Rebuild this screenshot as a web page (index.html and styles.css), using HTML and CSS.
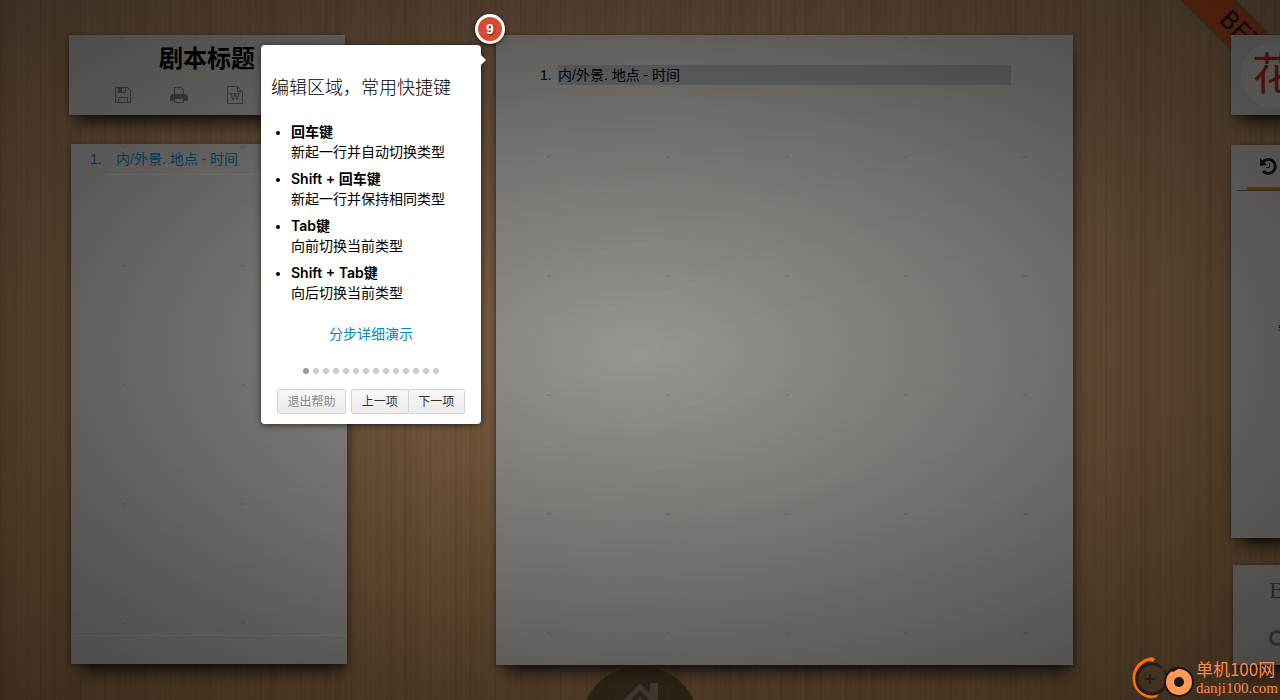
FILE: index.html
```
<!DOCTYPE html>
<html lang="zh-CN">
<head>
<meta charset="utf-8">
<title>剧本标题</title>
<link rel="stylesheet" href="styles.css">
</head>
<body>
<a class="ribbon" href="#">BETA</a>
<div class="workspace">
  <aside class="column">
    <header class="paper toolbar">
      <h1 class="title">剧本标题</h1>
      <div class="tools">
        <button class="tool" aria-label="保存"><svg viewBox="0 0 18 18"><path d="M1.500 1.500h12l3 3v12h-15z"/><path d="M4.500 16.500v-5h9v5M4.500 1.500v5h7v-5"/><path class="solid" d="M4 1h4v5.500H4z"/></svg></button>
        <button class="tool" aria-label="打印"><svg viewBox="0 0 18 18"><path d="M4.500 8V1.500h7l2 2V8M4.500 12.500v4h9v-4"/><path class="solid" d="M2 8h14l2 2v5h-4v-2H4v2H0v-5z"/></svg></button>
        <button class="tool" aria-label="导出 Word"><svg class="tall" viewBox="0 0 18 20"><path d="M1.500 1.500h10l5 5v12h-15zM11.500 1.500v5h5"/><path d="M3.500 8.500H7M11 8.500h3.500M5 8.500L7 15l2-6 2 6 2-6.500M8 8.500h2"/></svg></button>
      </div>
    </header>
    <nav class="paper outline">
      <ol class="scenes">
        <li class="scene"><span class="scene-no">1.</span><a class="scene-link" href="#">内/外景. 地点 - 时间</a></li>
      </ol>
      <div class="outline-foot"></div>
    </nav>
  </aside>
  <main class="paper editor">
    <ol class="script">
      <li class="row"><span class="row-no">1.</span><span class="line">内/外景. 地点 - 时间</span></li>
    </ol>
  </main>
  <aside class="column side">
    <section class="paper brand"><span class="logo">花</span></section>
    <section class="paper history">
      <div class="tabs">
        <button class="tab" aria-label="历史"><svg viewBox="0 0 18 18"><path d="M3.500 5.500A7 7 0 1 1 4 14"/><path class="solid" d="M1 1l0 8 7-1z"/><path class="thin" d="M10.500 6v4.500H7"/></svg></button>
      </div>
      <p class="empty">暂无</p>
    </section>
    <section class="paper format">
      <button class="style-btn">B</button>
      <span class="ring"></span>
    </section>
  </aside>
</div>
<button class="home" aria-label="首页"><svg viewBox="0 0 60 50"><path d="M3 36L30 9l27 27" stroke-width="5"/><path class="solid" d="M40 5h8v20l-8-8zM9 39l21-20 21 20v11H9z"/></svg></button>
<div class="shade"></div>
<section class="guide" role="dialog" aria-labelledby="guide-title">
  <span class="step">9</span>
  <h2 class="guide-title" id="guide-title">编辑区域，常用快捷键</h2>
  <ul class="keys">
    <li><b>回车键</b><br>新起一行并自动切换类型</li>
    <li><b>Shift + 回车键</b><br>新起一行并保持相同类型</li>
    <li><b>Tab键</b><br>向前切换当前类型</li>
    <li><b>Shift + Tab键</b><br>向后切换当前类型</li>
  </ul>
  <a class="demo" href="#">分步详细演示</a>
  <div class="dots"><i class="on"></i><i></i><i></i><i></i><i></i><i></i><i></i><i></i><i></i><i></i><i></i><i></i><i></i><i></i></div>
  <div class="actions">
    <button class="btn quit">退出帮助</button>
    <div class="pair"><button class="btn">上一项</button><button class="btn">下一项</button></div>
  </div>
</section>
<div class="site-mark">
  <svg class="site-logo" viewBox="0 0 64 44"><path d="M22 3A19 19 0 0 0 22 41" fill="none" stroke="#ff6e0a" stroke-width="3"/><path d="M12 6q6-7 12-3l-2 3q-5-2-10 0zM13 38q7 6 13 3l2-5q-8 4-15 2z" fill="#ff6e0a"/><path d="M31 12a15 15 0 1 0 3 18" fill="none" stroke="#261c18" stroke-width="3"/><path d="M19 18v10M14 23h10" stroke="#261c18" stroke-width="2"/><path d="M33 14l3 7" stroke="#261c18" stroke-width="2"/><circle cx="48" cy="26" r="14" fill="#ff9a55" stroke="#1c1512" stroke-width="2"/><path d="M38 13l9 0-5 3z" fill="#1c1512"/><circle cx="48" cy="26" r="5" fill="#1c1512"/></svg>
  <div class="site-text"><strong>单机100网</strong><span>danji100.com</span></div>
</div>
</body>
</html>
```
FILE: styles.css
```
* { box-sizing: border-box; }

body {
  margin: 0;
  height: 100vh;
  overflow: hidden;
  position: relative;
  font: 400 14px/20px "Liberation Sans", "Noto Sans CJK SC", sans-serif;
  color: #000;
  background:
    repeating-linear-gradient(90deg, rgba(90, 45, 10, .05) 0 1px, transparent 2px 5px),
    repeating-linear-gradient(90deg, rgba(90, 45, 10, .05) 0 2px, transparent 4px 13px),
    repeating-linear-gradient(90deg, rgba(110, 60, 10, .08) 0 3px, transparent 20px 41px, rgba(110, 60, 10, .05) 59px, transparent 67px),
    linear-gradient(#cca078, #cc9a64);
}

button { font: inherit; padding: 0; border: 0; background: none; }
h1, h2, p, ol, ul { margin: 0; padding: 0; }
a { color: #0088cc; text-decoration: none; }
svg { display: block; }

.workspace {
  position: relative;
  display: grid;
  grid-template-columns: 278px minmax(0, 1fr) 49px;
  column-gap: 149px;
  height: 100%;
  padding: 35px 0 35px 69px;
}
.column { display: flex; flex-direction: column; gap: 29px; }

.paper {
  background:
    radial-gradient(ellipse 2px 1px at 53px 3px, rgba(0, 0, 0, .08) 90%, transparent),
    repeating-linear-gradient(178deg, rgba(0, 0, 0, .01) 0 1px, transparent 2px 7px),
    #f0eae4;
  background-size: 119px 119px, auto, auto;
  box-shadow: 0 1px 5px rgba(0, 0, 0, .35), 2px 13px 16px -6px rgba(0, 0, 0, .75);
}

.toolbar { height: 80px; width: 276px; padding-top: 10px; text-align: center; }
.title { font-size: 24px; line-height: 28px; font-weight: 700; }
.tools { display: flex; justify-content: center; gap: 38px; margin-top: 12px; padding-right: 56px; }
.tool { display: flex; align-items: center; height: 20px; }
.tool svg { width: 18px; height: 18px; fill: none; stroke: #8a8783; stroke-width: 1; }
.tool .tall { height: 20px; }
.tool .solid { fill: #8a8783; stroke: none; }

.outline { flex: 1; width: 276px; margin: 0 0 1px 2px; display: flex; flex-direction: column; }
.scenes { flex: 1; list-style: none; }
.scene {
  display: flex;
  height: 31px;
  padding: 5px 0 0 19px;
  background: linear-gradient(#fffffb, #fffffb) 35px 100% / 100% 1px no-repeat;
}
.scene-no { width: 26px; color: #0095e0; }
.scene-link { flex: 1; color: #0095e0; }
.outline-foot { height: 29px; border-top: 1px solid #fffffb; }

.editor { padding: 30px 62px 30px 44px; margin-right: 9px; }
.script { list-style: none; }
.row { display: flex; }
.row-no { width: 18px; }
.line { flex: 1; background: #c5c8cc; height: 20px; }

.side { gap: 0; width: 276px; }
.brand { height: 80px; padding: 7px 10px; }
.logo {
  display: block;
  width: 66px;
  height: 66px;
  padding-left: 11px;
  border-radius: 50%;
  background: #fbfaf8;
  color: #e03426;
  font-size: 44px;
  line-height: 66px;
}
.history { flex: 1; margin: 30px 0 27px; }
.tabs { height: 46px; margin-left: 6px; padding: 12px 0 0 22px; border-bottom: 1px solid #777; background: linear-gradient(#f08c00, #f08c00) 10px 100% / 200px 3px no-repeat; }
.tab svg { width: 18px; height: 18px; fill: none; stroke: #222; stroke-width: 3; }
.tab .solid { fill: #222; stroke: none; }
.tab .thin { stroke-width: 1; }
.empty { margin: 130px 0 0 47px; }
.format { height: 100px; margin-left: 2px; padding: 13px 0 0 36px; display: flex; flex-direction: column; align-items: flex-start; gap: 28px; }
.style-btn { font: 400 24px/24px "Liberation Serif", serif; color: #777; }
.ring { width: 16px; height: 16px; border: 3px solid #888; border-radius: 50%; }

.ribbon {
  position: absolute;
  top: 18px;
  right: -84px;
  width: 240px;
  height: 36px;
  padding-left: 91px;
  transform: rotate(45deg);
  background: #e8602a;
  box-shadow: 0 0 3px rgba(0, 0, 0, .6);
  color: #222;
  font: 400 26px/34px "DejaVu Sans Mono", monospace;
}
.home {
  position: absolute;
  left: calc(50% - 60px);
  top: calc(100% - 34px);
  width: 120px;
  height: 120px;
  border-radius: 50%;
  background: rgba(60, 45, 35, .6);
}
.home svg { width: 60px; height: 50px; margin: -46px auto 0; fill: none; stroke: #a08f80; }
.home .solid { fill: #a08f80; stroke: none; }

.shade {
  position: absolute;
  inset: 0;
  background: radial-gradient(ellipse farthest-corner, rgba(0, 0, 0, .36), rgba(0, 0, 0, .62) 70%, rgba(0, 0, 0, .7));
}

.guide {
  position: absolute;
  left: 261px;
  top: 45px;
  width: 220px;
  padding: 33px 10px 10px;
  background: #fff;
  border-radius: 4px;
  box-shadow: 0 1px 6px rgba(0, 0, 0, .6);
}
.guide::after {
  content: "";
  position: absolute;
  left: 100%;
  top: 10px;
  border: 5px solid transparent;
  border-left-color: #fff;
  border-right: 0;
}
.step {
  position: absolute;
  top: -31px;
  right: -24px;
  width: 30px;
  height: 30px;
  border: 3px solid #fff;
  border-radius: 50%;
  background: #da4b2f;
  box-shadow: 0 1px 4px rgba(0, 0, 0, .7);
  color: #fff;
  font: 700 14px/24px "Liberation Sans", sans-serif;
  text-align: center;
  text-shadow: 1px 1px 2px rgba(0, 0, 0, .5);
}
.guide-title { font-size: 18px; line-height: 20px; font-weight: 300; white-space: nowrap; }
.keys { margin: 24px 0 21px; padding-left: 20px; }
.keys li + li { margin-top: 7px; }
.keys b { font: 600 14px/20px Inter, "Noto Sans CJK SC", sans-serif; }
.demo { display: block; text-align: center; }
.dots { display: flex; justify-content: center; gap: 4px; margin: 24px 0 15px; }
.dots i { width: 6px; height: 6px; border-radius: 50%; background: #ccc; }
.dots .on { background: #999; }
.actions { display: flex; gap: 5px; padding: 0 6px; }
.pair { display: flex; flex: 1; }
.btn {
  flex: 1;
  height: 25px;
  padding-top: 2px;
  border: 1px solid #d4d4d4;
  border-radius: 2px;
  background: linear-gradient(#f6f6f6, #ececec);
  color: #333;
  font-size: 12px;
  line-height: 21px;
}
.btn + .btn { border-left: 0; border-radius: 0 2px 2px 0; }
.quit { flex: none; width: 69px; color: #888; }

.site-mark { position: absolute; right: 2px; bottom: 0; display: flex; align-items: center; gap: 1px; color: #ff8a4a; }
.site-logo { width: 64px; height: 44px; }
.site-text { display: flex; flex-direction: column; }
.site-text strong { font: 400 17px/20px "Noto Sans CJK SC", sans-serif; white-space: nowrap; }
.site-text span { font: 400 15px/18px "Liberation Serif", serif; }
```
